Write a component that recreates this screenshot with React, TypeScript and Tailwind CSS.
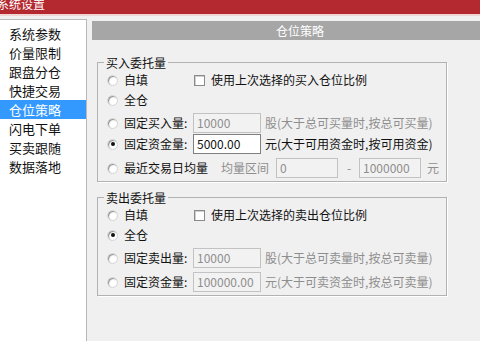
import React from "react";

const MENU = ["系统参数", "价量限制", "跟盘分仓", "快捷交易", "仓位策略", "闪电下单", "买卖跟随", "数据落地"];

function Radio({ checked }: { checked?: boolean }) {
  return (
    <span className="flex items-center justify-center w-[11px] h-[11px] shrink-0 rounded-full border border-[#d4d4d4] bg-white shadow-[inset_1px_1px_1px_#8c8c8c]">
      {checked && <span className="w-[4px] h-[4px] rounded-full bg-[#111]" />}
    </span>
  );
}

function Check() {
  return (
    <span className="block ml-[1px] w-[11px] h-[11px] shrink-0 border border-[#8a8a8a] bg-white shadow-[inset_1px_1px_0_#d0d0d0]" />
  );
}

function Opt({ label, checked, wide }: { label: string; checked?: boolean; wide?: boolean }) {
  return (
    <div className={`flex items-center ${wide ? "" : "w-[86px] shrink-0"}`}>
      <Radio checked={checked} />
      <span className="ml-[6px] whitespace-nowrap">{label}</span>
    </div>
  );
}

function Field({ value, disabled, w = "w-[68px]" }: { value: string; disabled?: boolean; w?: string }) {
  return (
    <div
      className={`${w} h-[20px] shrink-0 flex items-center pl-[3px] border ${
        disabled ? "border-[#c2c2c2] bg-[#f2f2f2] text-[#8e8e8e]" : "border-[#7f7f7f] bg-white text-[#111]"
      }`}
    >
      {value}
    </div>
  );
}

function GroupBox({ title, children, className }: { title: string; children: React.ReactNode; className?: string }) {
  return (
    <div className={`relative ml-[5px] w-[350px] border border-[#b2b2b2] shadow-[1px_1px_0_#fff] pt-[7px] pb-[3px] pl-[9px] ${className ?? ""}`}>
      <span className="absolute -top-[9px] left-[6px] px-[2px] bg-[#f0f0f0] leading-[17px]">{title}</span>
      {children}
    </div>
  );
}

export default function App() {
  return (
    <div className="w-[480px] h-[341px] overflow-hidden flex flex-col bg-[#f0f0f0] text-[12px] text-[#111] font-['Noto_Sans_CJK_SC',sans-serif]">
      {/* title bar */}
      <div className="h-[14px] shrink-0 bg-[#b4292f] overflow-hidden">
        <span className="block -ml-[3px] -mt-[2px] leading-[12px] text-white">系统设置</span>
      </div>
      <div className="h-[2px] shrink-0 bg-[#f1d4d4]" />

      <div className="flex flex-1 min-h-0">
        {/* menu */}
        <div className="w-[87px] shrink-0 mt-[3px] bg-white border-t border-r border-[#b8b8b8] pt-[4px] text-[13px]">
          {MENU.map((m) => (
            <div
              key={m}
              className={`h-[19px] leading-[19px] pl-[9px] ${m === "仓位策略" ? "bg-[#3399ff] text-white" : "text-[#111]"}`}
            >
              {m}
            </div>
          ))}
        </div>

        {/* content */}
        <div className="flex-1 pl-[5px] pt-[5px]">
          <div className="h-[19px] bg-[#a6a6a6] text-white leading-[19px] pl-[184px] whitespace-nowrap">仓位策略</div>

          <GroupBox title="买入委托量" className="mt-[22px]">
            <div className="h-[20px] flex items-center">
              <Opt label="自填" />
              <Check />
              <span className="ml-[6px] whitespace-nowrap">使用上次选择的买入仓位比例</span>
            </div>
            <div className="h-[20px] flex items-center">
              <Opt label="全仓" />
            </div>
            <div className="mt-[3px] h-[20px] flex items-center">
              <Opt label="固定买入量:" />
              <Field value="10000" disabled />
              <span className="ml-[4px] whitespace-nowrap text-[#8e8e8e]">股(大于总可买量时,按总可买量)</span>
            </div>
            <div className="mt-[1px] h-[20px] flex items-center">
              <Opt label="固定资金量:" checked />
              <Field value="5000.00" />
              <span className="ml-[4px] whitespace-nowrap">元(大于可用资金时,按可用资金)</span>
            </div>
            <div className="mt-[4px] h-[20px] flex items-center">
              <Opt label="最近交易日均量" wide />
              <span className="ml-[13px] text-[#8e8e8e] whitespace-nowrap">均量区间</span>
              <div className="ml-[7px]"><Field value="0" disabled w="w-[62px]" /></div>
              <span className="ml-[9px] w-[12px] text-[#8e8e8e]">-</span>
              <Field value="1000000" disabled w="w-[62px]" />
              <span className="ml-[6px] text-[#8e8e8e]">元</span>
            </div>
          </GroupBox>

          <GroupBox title="卖出委托量" className="mt-[15px]">
            <div className="h-[20px] flex items-center">
              <Opt label="自填" />
              <Check />
              <span className="ml-[6px] whitespace-nowrap">使用上次选择的卖出仓位比例</span>
            </div>
            <div className="h-[20px] flex items-center">
              <Opt label="全仓" checked />
            </div>
            <div className="mt-[3px] h-[20px] flex items-center">
              <Opt label="固定卖出量:" />
              <Field value="10000" disabled />
              <span className="ml-[4px] whitespace-nowrap text-[#8e8e8e]">股(大于总可卖量时,按总可卖量)</span>
            </div>
            <div className="mt-[4px] h-[20px] flex items-center">
              <Opt label="固定资金量:" />
              <Field value="100000.00" disabled />
              <span className="ml-[4px] whitespace-nowrap text-[#8e8e8e]">元(大于可卖资金时,按总可卖量)</span>
            </div>
          </GroupBox>
        </div>
      </div>
    </div>
  );
}
